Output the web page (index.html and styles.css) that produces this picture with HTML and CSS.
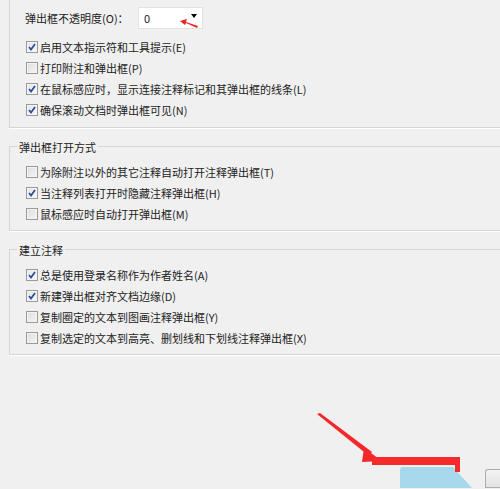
FILE: index.html
```html
<!DOCTYPE html>
<html lang="zh-CN">
<head>
    <meta charset="UTF-8">
    <meta name="viewport" content="width=device-width, initial-scale=1.0">
    <title>注释首选项</title>
    <link rel="stylesheet" href="styles.css">
</head>
<body>
    <div class="dialog">
        <div class="group first">
            <div class="combo-row">
                <label class="combo-label" for="opacity">弹出框不透明度(O)：</label>
                <div class="combo" id="opacity">
                    <span class="combo-value">0</span>
                    <span class="combo-arrow"></span>
                </div>
            </div>
            <div class="rows">
                <div class="row"><span class="check on"></span>启用文本指示符和工具提示(E)</div>
                <div class="row"><span class="check"></span>打印附注和弹出框(P)</div>
                <div class="row"><span class="check on"></span>在鼠标感应时，显示连接注释标记和其弹出框的线条(L)</div>
                <div class="row"><span class="check on"></span>确保滚动文档时弹出框可见(N)</div>
            </div>
        </div>

        <div class="group">
            <div class="group-title">弹出框打开方式</div>
            <div class="row"><span class="check"></span>为除附注以外的其它注释自动打开注释弹出框(T)</div>
            <div class="row"><span class="check on"></span>当注释列表打开时隐藏注释弹出框(H)</div>
            <div class="row"><span class="check"></span>鼠标感应时自动打开弹出框(M)</div>
        </div>

        <div class="group">
            <div class="group-title">建立注释</div>
            <div class="row"><span class="check on"></span>总是使用登录名称作为作者姓名(A)</div>
            <div class="row"><span class="check on"></span>新建弹出框对齐文档边缘(D)</div>
            <div class="row"><span class="check"></span>复制圈定的文本到图画注释弹出框(Y)</div>
            <div class="row"><span class="check"></span>复制选定的文本到高亮、删划线和下划线注释弹出框(X)</div>
        </div>

        <div class="footer">
            <div class="highlight"></div>
            <div class="btn"></div>
        </div>
    </div>

    <!-- 红色标注箭头 -->
    <svg class="marks" width="500" height="489" viewBox="0 0 500 489">
        <polygon points="198,26 186,22 187,19 180,21 185,25 186,23 197,28" fill="#e8262a"/>
        <polygon points="317,414 320,413 372,452 369,456" fill="#f2282a"/>
        <polygon points="364,448 382,461 362,462" fill="#f2282a"/>
        <polygon points="372,457 460,457 460,472 455,472 455,465 372,465" fill="#f52a2a"/>
    </svg>
</body>
</html>
```

FILE: styles.css
```css
body {
    margin: 0;
    height: 489px;
    overflow: hidden;
    background-color: #f0f0f0;
    font-family: "Noto Sans CJK SC", "Liberation Sans", sans-serif;
    font-size: 11px;
    color: #222;
}
.dialog {
    padding-left: 9px;
}
.group {
    margin-top: 18px;
    padding: 0 0 6px 15px;
    border: 1px solid #d5d5d5;
    border-right: none;
    box-shadow: 0 1px 0 #fff;
}
.group.first {
    margin-top: -10px;
    padding-top: 16px;
    padding-bottom: 7px;
}
.group-title {
    display: table;
    margin: -7px 0 7px -8px;
    padding: 0 2px;
    line-height: 14px;
    background-color: #f0f0f0;
}
.combo-row {
    display: flex;
    align-items: center;
    height: 21px;
}
.combo-label {
    width: 113px;
}
.combo {
    display: flex;
    align-items: center;
    justify-content: space-between;
    box-sizing: border-box;
    width: 65px;
    height: 22px;
    padding: 0 5px 0 5px;
    background-color: #fff;
    border: 1px solid #e2e2e2;
}
.combo-arrow {
    width: 0;
    height: 0;
    border-left: 3px solid transparent;
    border-right: 3px solid transparent;
    border-top: 4px solid #000;
    margin-top: -3px;
}
.rows {
    margin-top: 8px;
}
.row {
    display: flex;
    align-items: center;
    height: 21px;
    white-space: nowrap;
}
.check {
    box-sizing: border-box;
    width: 12px;
    height: 12px;
    margin: 0 2px 0 1px;
    border: 1px solid #9a9a9a;
    background: linear-gradient(135deg, #dcdcdc, #f6f6f6);
    box-shadow: inset 0 0 0 1px #f4f4f4;
    flex-shrink: 0;
}
.check.on {
    background: url("data:image/svg+xml,%3Csvg xmlns='http://www.w3.org/2000/svg' width='10' height='10'%3E%3Cpath d='M2 5 L4 7.5 L8 2' fill='none' stroke='%23284b9e' stroke-width='1.7'/%3E%3C/svg%3E") center no-repeat, linear-gradient(135deg, #e4e4e4, #f8f8f8);
}
.footer {
    display: flex;
    margin-top: 112px;
}
.highlight {
    flex-shrink: 0;
    width: 72px;
    height: 21px;
    margin-left: 391px;
    background-color: #a8d8ec;
    border-top-left-radius: 3px;
    clip-path: polygon(0 0, 53px 0, 72px 100%, 0 100%);
}
.btn {
    flex-shrink: 0;
    box-sizing: border-box;
    width: 15px;
    height: 19px;
    margin: 2px 0 0 13px;
    border: 1px solid #acacac;
    border-right: none;
    border-radius: 3px 0 0 0;
    background: linear-gradient(#f2f2f2, #e3e3e3);
}
.marks {
    position: absolute;
    top: 0;
    left: 0;
    pointer-events: none;
}
```
